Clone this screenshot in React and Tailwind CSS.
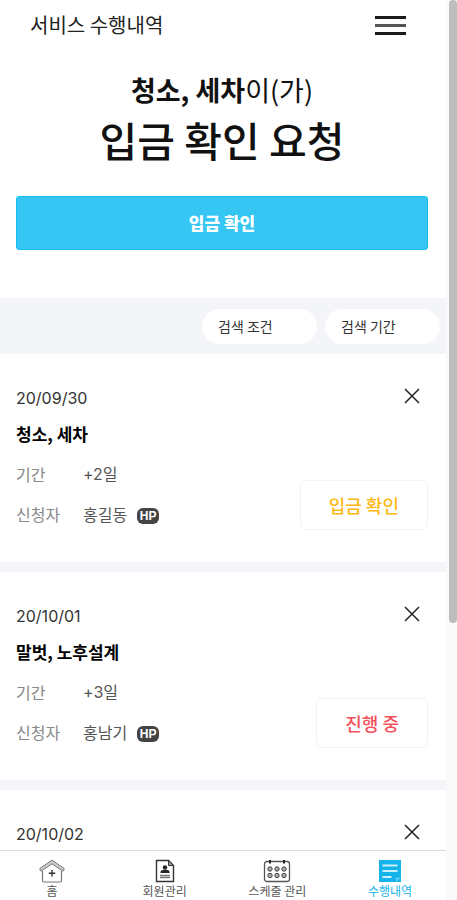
import React, { useState } from 'react';

const services = [
    { id: 1, date: '20/09/30', title: '청소, 세차', period: '+2일', applicant: '홍길동', status: '입금 확인', statusClass: 'text-[#fdb813]' },
    { id: 2, date: '20/10/01', title: '말벗, 노후설계', period: '+3일', applicant: '홍남기', status: '진행 중', statusClass: 'text-[#f4515b]' },
    { id: 3, date: '20/10/02' },
];

const HomeIcon = () => (
    <svg width="28" height="24" viewBox="0 0 26 24" fill="none" stroke="#777777" aria-hidden="true">
        <path d="M3.500 11.500V21.500a1.500 1.500 0 0 0 1.500 1.500h16a1.500 1.500 0 0 0 1.500-1.500V11.500" strokeWidth="1.200" />
        <path d="M13 1.200 1 9.300v2.200l1.400.4L13 4.800l10.600 7.100 1.400-.4V9.300z" fill="#cccccc" strokeWidth="1" strokeLinejoin="round" />
        <path d="M13 11v6.500M9.750 14.250h6.500" stroke="#333333" strokeWidth="1.400" />
    </svg>
);

const MemberIcon = () => (
    <svg width="20" height="24" viewBox="0 0 20 24" fill="none" stroke="#333333" aria-hidden="true">
        <path d="M1.500 1.500h12l5 5v16h-17z" strokeWidth="1.400" />
        <path d="M13.500 1.500v5h5z" fill="#999999" strokeWidth="1" />
        <circle cx="10" cy="8.500" r="2.200" fill="#222222" stroke="none" />
        <path d="M5.500 14v-1c0-1.500 1.500-2.200 4.500-2.200s4.500.7 4.500 2.200v1z" fill="#222222" stroke="none" />
        <path d="M5 16.500h10M5 18.500h10" stroke="#777777" strokeWidth="1.400" />
    </svg>
);

const CalendarIcon = () => (
    <svg width="28" height="24" viewBox="0 0 28 24" fill="none" stroke="#555555" aria-hidden="true">
        <rect x="1.500" y="2.500" width="25" height="20" rx="2.500" strokeWidth="1.300" />
        <path d="M7 1v3.500M21 1v3.500" stroke="#222222" strokeWidth="2" />
        <g fill="#aaaaaa" stroke="#444444" strokeWidth="1">
            <circle cx="7" cy="10" r="2.200" />
            <circle cx="14" cy="10" r="2.200" />
            <circle cx="21" cy="10" r="2.200" />
            <circle cx="7" cy="16.500" r="2.200" />
            <circle cx="14" cy="16.500" r="2.200" />
            <circle cx="21" cy="16.500" r="2.200" />
        </g>
    </svg>
);

const HistoryIcon = () => (
    <svg width="22" height="24" viewBox="0 0 22 24" fill="none" aria-hidden="true">
        <path d="M0 1h22v22H0z" fill="#14b4ea" />
        <path d="M17 23v-4.500h5z" fill="#5fcdf2" />
        <path d="M3.500 6.500h15M3.500 12h15M3.500 18h9" stroke="#ccf0fc" strokeWidth="2" />
    </svg>
);

const tabs = [
    { label: '홈', Icon: HomeIcon },
    { label: '회원관리', Icon: MemberIcon },
    { label: '스케줄 관리', Icon: CalendarIcon },
    { label: '수행내역', Icon: HistoryIcon, active: true },
];

const FilterSelect = ({ label }) => (
    <select
        aria-label={label}
        className="appearance-none w-[115px] h-[35px] rounded-full bg-white pl-4 pr-3 text-sm text-[#333333] outline-none cursor-pointer"
    >
        <option>{label}</option>
    </select>
);

const ServiceCard = ({ service, onRemove }) => (
    <li className="bg-white pl-4 pr-[18px] pt-8 min-h-[208px]">
        <div className="flex items-start justify-between h-6">
            <time className="leading-6 text-[#333333] font-['Inter','Noto_Sans_CJK_KR',sans-serif]">{service.date}</time>
            <button type="button" aria-label="삭제" onClick={() => onRemove(service.id)} className="size-5 mr-1.5 flex items-center justify-center cursor-pointer">
                <svg width="16" height="16" viewBox="0 0 16 16" stroke="#222222" strokeWidth="1.500" aria-hidden="true">
                    <path d="M1 1l14 14M15 1 1 15" />
                </svg>
            </button>
        </div>
        {service.title && (
            <>
                <h2 className="mt-3 text-[17px] leading-6 font-bold text-black">{service.title}</h2>
                <div className="flex items-start justify-between h-[84px]">
                    <dl className="mt-4 grid grid-cols-[67px_auto] gap-y-4 leading-6">
                        <dt className="text-[#888888]">기간</dt>
                        <dd className="text-[#555555] font-['Inter','Noto_Sans_CJK_KR',sans-serif]">{service.period}</dd>
                        <dt className="text-[#888888]">신청자</dt>
                        <dd className="text-[#555555] flex items-center gap-2.5">
                            {service.applicant}
                            <span className="mt-1 w-[22px] h-4 rounded-md bg-[#444444] text-white text-xs leading-4 font-bold text-center font-['Liberation_Sans',sans-serif]">HP</span>
                        </dd>
                    </dl>
                    <button type="button" className={`self-end h-[50px] px-7 rounded-md border border-[#f3f3f3] text-lg font-medium cursor-pointer ${service.statusClass}`}>
                        {service.status}
                    </button>
                </div>
            </>
        )}
    </li>
);

const App = () => {
    const [items, setItems] = useState(services);

    const handleRemove = (id) => {
        setItems(items.filter((item) => item.id !== id));
    };

    return (
        <div className="h-screen flex bg-white text-base font-['Noto_Sans_CJK_KR',sans-serif]">
            <div className="flex-1 min-w-0 flex flex-col">
                <main className="flex-1 min-h-0 overflow-y-auto [scrollbar-width:none]">
                    <header className="flex items-center justify-between h-[50px] pl-[30px] pr-10">
                        <span className="text-xl text-[#222222]">서비스 수행내역</span>
                        <button type="button" aria-label="메뉴" className="flex flex-col gap-[5px] cursor-pointer">
                            <span className="block w-[31px] h-[3px] bg-[#1a1a1a]"></span>
                            <span className="block w-[31px] h-[3px] bg-[#555555]"></span>
                            <span className="block w-[31px] h-[3px] bg-[#1a1a1a]"></span>
                        </button>
                    </header>

                    <section className="pt-5 pb-12 pl-4 pr-[18px]">
                        <h1 className="text-center text-[#111111]">
                            <span className="block text-[27px] leading-10">
                                <b className="font-bold">청소, 세차</b>이(가)
                            </span>
                            <span className="block text-[41px] leading-[58px] font-medium">입금 확인 요청</span>
                        </h1>
                        <button type="button" className="mt-7 w-full h-[54px] rounded-[3px] border border-[#14bdf0] bg-[#36c6f4] text-[17px] font-black text-white cursor-pointer">
                            입금 확인
                        </button>
                    </section>

                    <div className="flex items-center justify-end gap-2 h-[56px] pr-1.5 bg-[#f3f5f9]">
                        <FilterSelect label="검색 조건" />
                        <FilterSelect label="검색 기간" />
                    </div>

                    <ul className="flex flex-col gap-2.5 bg-[#f3f5f9]">
                        {items.map((service) => (
                            <ServiceCard key={service.id} service={service} onRemove={handleRemove} />
                        ))}
                    </ul>
                </main>

                <nav className="flex justify-between h-[50px] pt-2 pl-3 pr-4 border-t border-[#dddddd] bg-white">
                    {tabs.map(({ label, Icon, active }) => (
                        <a key={label} href="#" className={`w-20 flex flex-col items-center text-xs leading-4 ${active ? 'text-[#14b4ea]' : 'text-[#555555]'}`}>
                            <Icon />
                            {label}
                        </a>
                    ))}
                </nav>
            </div>

            {/* scroll track */}
            <div className="w-[11px] pl-[3px] bg-[#f9f9f9]">
                <div className="h-[623px] rounded-full bg-[#bdbdbd]"></div>
            </div>
        </div>
    );
};

export default App;
